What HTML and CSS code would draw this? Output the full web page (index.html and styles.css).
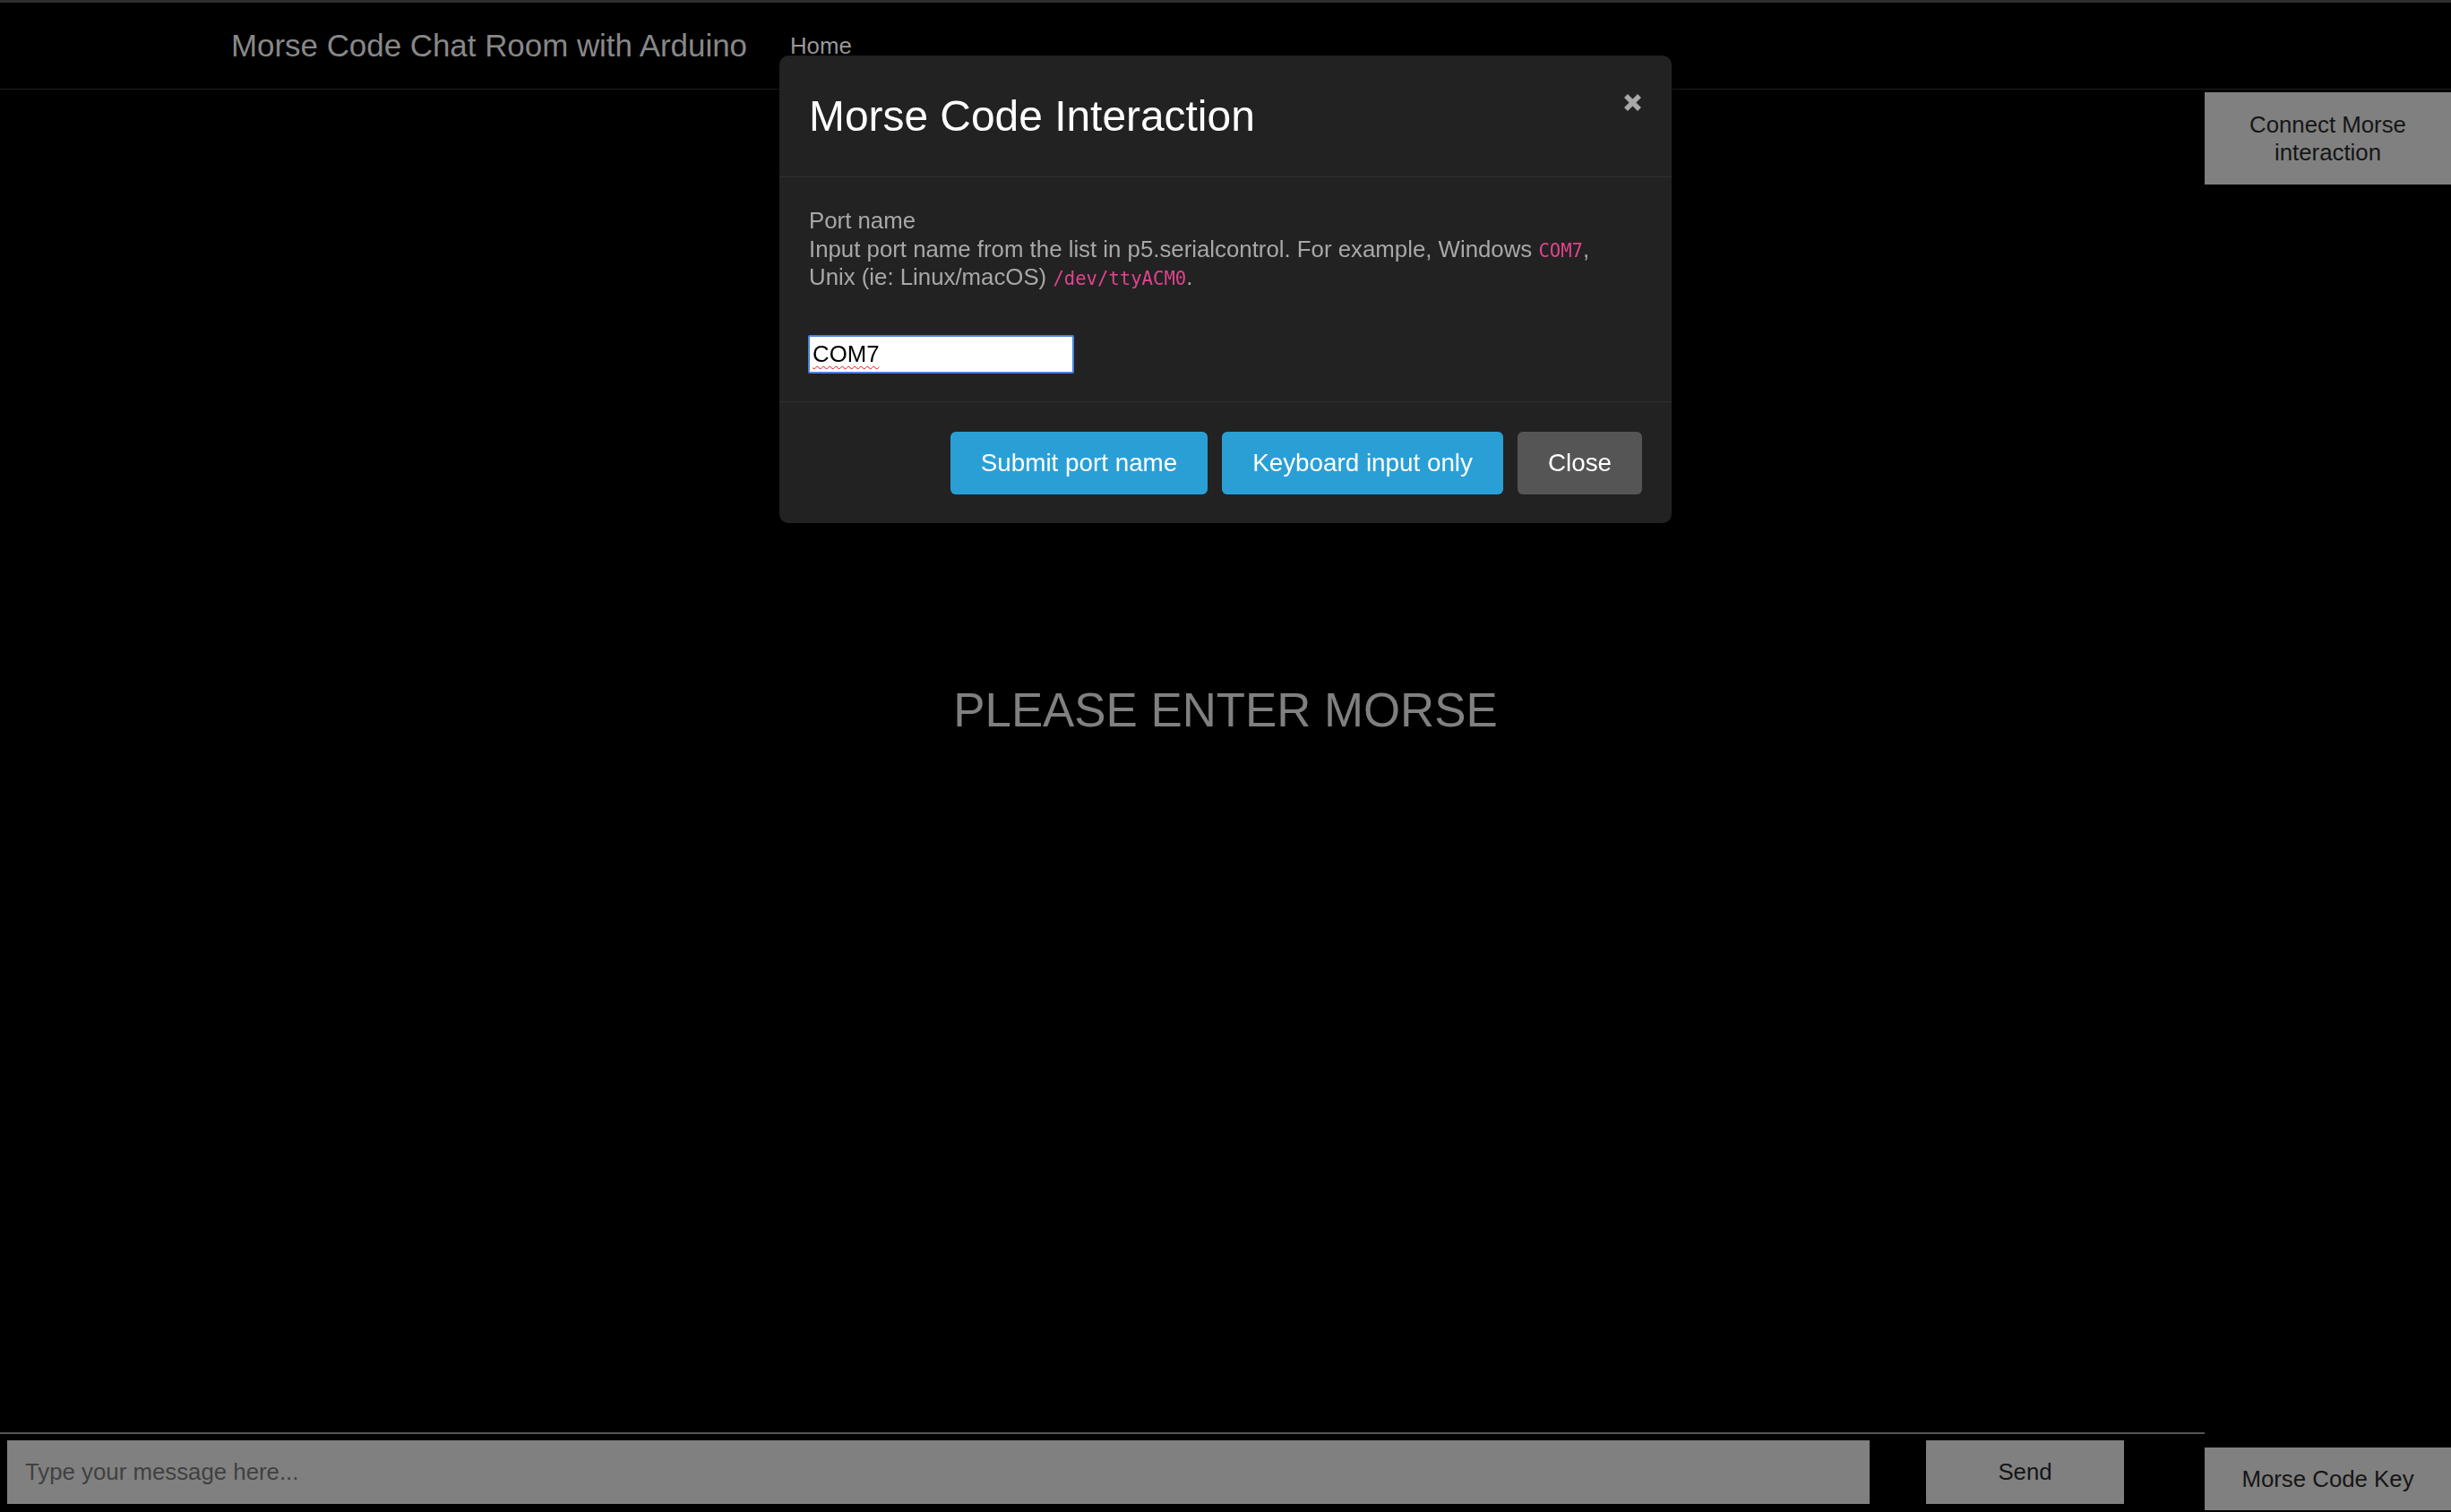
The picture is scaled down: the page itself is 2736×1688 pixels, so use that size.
FILE: index.html
```html
<!DOCTYPE html>
<html lang="en">
<head>
<meta charset="utf-8">
<title>Morse Code Chat Room with Arduino</title>
<link rel="stylesheet" href="styles.css">
</head>
<body>
  <header class="navbar">
    <a class="brand">Morse Code Chat Room with Arduino</a>
    <a class="nav-link">Home</a>
  </header>

  <main class="layout">
    <div class="side-top">
      <button class="side-btn connect-btn">Connect Morse<br>interaction</button>
    </div>
    <section class="stage">
      <h1 class="prompt">PLEASE ENTER MORSE</h1>
    </section>
    <form class="chat-bar">
      <input class="chat-input" type="text" placeholder="Type your message here...">
      <button class="send-btn" type="button">Send</button>
    </form>
    <div class="side-bottom">
      <button class="side-btn key-btn">Morse Code Key</button>
    </div>
  </main>

  <div class="modal-layer">
    <div class="modal">
      <div class="modal-header">
        <h4 class="modal-title">Morse Code Interaction</h4>
        <button class="close" type="button" aria-label="Close">
          <svg width="21" height="21" viewBox="0 0 21 21"><path d="M3 3L18 18M18 3L3 18" stroke="#a8a8a8" stroke-width="5.5" stroke-linecap="butt" fill="none"/></svg>
        </button>
      </div>
      <div class="modal-body">
        <p class="help">Port name<br>Input port name from the list in p5.serialcontrol. For example, Windows <code>COM7</code>,<br>Unix (ie: Linux/macOS) <code>/dev/ttyACM0</code>.</p>
        <div class="port-input"><span class="spell">COM7</span></div>
      </div>
      <div class="modal-footer">
        <button class="btn btn-primary" type="button">Submit port name</button>
        <button class="btn btn-primary" type="button">Keyboard input only</button>
        <button class="btn btn-default" type="button">Close</button>
      </div>
    </div>
  </div>
</body>
</html>
```

FILE: styles.css
```css
* { box-sizing: border-box; }

html, body {
  margin: 0;
  padding: 0;
  height: 100%;
}

body {
  background: #000;
  color: #888;
  font-family: "Liberation Sans", Arial, sans-serif;
  font-size: 25.8px;
  height: 1688px;
  overflow: hidden;
  display: flex;
  flex-direction: column;
}

button { font-family: inherit; cursor: pointer; }

/* ---------- navbar ---------- */
.navbar {
  flex: 0 0 100px;
  display: flex;
  align-items: flex-start;
  border-top: 3px solid #2e2e2e;
  border-bottom: 1px solid #1f1f1f;
  background: #000;
}

.brand {
  margin-left: 258px;
  margin-top: 31px;
  font-size: 34.9px;
  line-height: 1;
  color: #888;
}

.nav-link {
  margin-left: 48px;
  margin-top: 36px;
  font-size: 25.8px;
  line-height: 1;
  color: #9a9a9a;
}

/* ---------- page layout ---------- */
.layout {
  flex: 1;
  display: grid;
  grid-template-columns: 1fr 275px;
  grid-template-rows: auto 1fr auto;
}

.side-top {
  grid-column: 2;
  grid-row: 1;
  padding-top: 3px;
}

.side-btn {
  display: block;
  width: 100%;
  border: 0;
  background: #808080;
  color: #151515;
  font-size: 25.8px;
  line-height: 31px;
  text-align: center;
  padding: 0;
}

.connect-btn {
  height: 103px;
}

.stage {
  grid-column: 1 / span 2;
  grid-row: 2;
  text-align: center;
}

.prompt {
  margin: 555px 0 0;
  font-size: 52.8px;
  line-height: 1.2;
  font-weight: normal;
  color: #808080;
}

.chat-bar {
  grid-column: 1;
  grid-row: 3;
  margin: 0;
  display: flex;
  align-items: center;
  border-top: 2px solid #555;
  padding: 7px 90px 9px 8px;
  gap: 63px;
}

.chat-input {
  flex: 1;
  height: 71px;
  border: 0;
  background: #808080;
  padding: 0 20px;
  font-family: "Liberation Sans", Arial, sans-serif;
  font-size: 25.8px;
  color: #222;
  outline: none;
}

.chat-input::placeholder { color: #404040; }

.send-btn {
  flex: 0 0 221px;
  height: 71px;
  border: 0;
  background: #808080;
  color: #151515;
  font-size: 25.8px;
  padding: 0;
}

.side-bottom {
  grid-column: 2;
  grid-row: 3;
  align-self: end;
  padding-bottom: 2px;
}

.key-btn {
  height: 70px;
  line-height: 70px;
}

/* ---------- modal ---------- */
.modal-layer {
  position: fixed;
  inset: 0;
  display: flex;
  justify-content: center;
  align-items: flex-start;
  pointer-events: none;
}

.modal {
  margin-top: 62px;
  width: 996px;
  background: #222;
  border-radius: 10px;
  box-shadow: 0 5px 15px rgba(0, 0, 0, 0.5);
  pointer-events: auto;
}

.modal-header {
  display: flex;
  justify-content: space-between;
  align-items: flex-start;
  padding: 41px 33px 41px 33px;
  border-bottom: 1px solid #303030;
}

.modal-title {
  margin: 0;
  font-size: 47.9px;
  line-height: 53px;
  font-weight: normal;
  color: #fff;
}

.close {
  margin-top: 1px;
  padding: 0;
  border: 0;
  background: none;
  width: 21px;
  height: 21px;
  line-height: 0;
}

.modal-body {
  padding: 33px 32px 31px 32px;
}

.help {
  margin: 0 0 48px 1px;
  font-size: 25.8px;
  line-height: 31.5px;
  color: #a8a8a8;
}

code {
  font-family: "DejaVu Sans Mono", "Liberation Mono", monospace;
  font-size: 20.6px;
  line-height: 1;
  color: #e0448e;
}

.port-input {
  width: 297px;
  height: 43px;
  background: #fff;
  border: 2px solid #4a84dc;
  border-radius: 2px;
  padding: 0 3px;
  font-size: 25.8px;
  line-height: 39px;
  color: #000;
}

.spell {
  text-decoration: underline wavy #e01010;
  text-decoration-thickness: 1px;
  text-underline-offset: 4px;
}

.modal-footer {
  display: flex;
  justify-content: flex-end;
  gap: 16px;
  padding: 33px 33px 32px;
  border-top: 1px solid #303030;
}

.btn {
  height: 70px;
  padding: 0 34px;
  border: 0;
  border-radius: 6px;
  font-size: 27.8px;
  color: #fff;
}

.btn-primary { background: #2a9fd6; }
.btn-default { background: #555; }
```
